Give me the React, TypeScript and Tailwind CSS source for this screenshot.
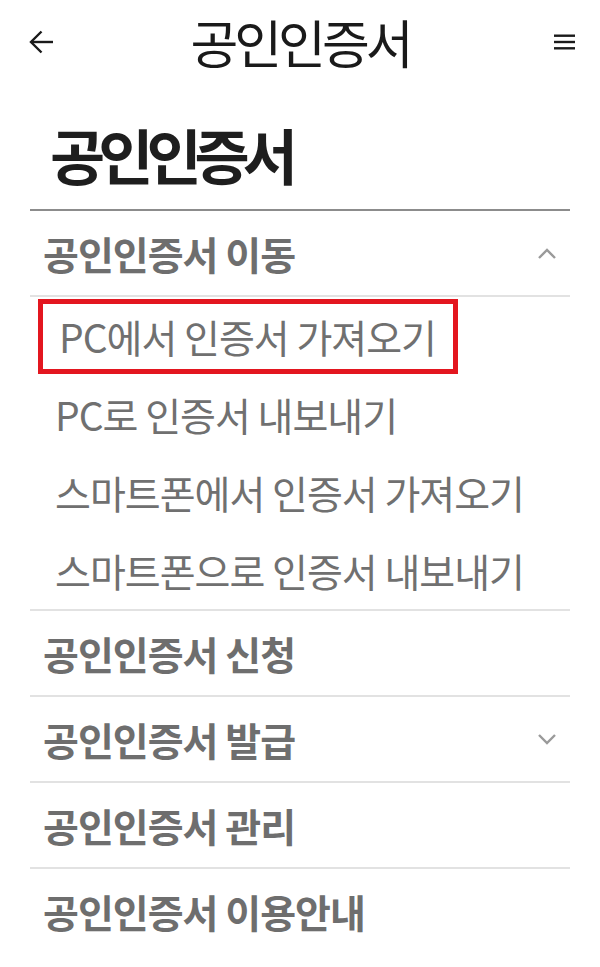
const font = { fontFamily: '"Noto Sans CJK KR", "Noto Sans", sans-serif' };

function BackArrow() {
  return (
    <svg width="26" height="24" viewBox="0 0 26 24" fill="none" stroke="#1a1a1a" strokeWidth="2.4">
      <path d="M25 12H3" />
      <path d="M13.5 1.5L3 12l10.5 10.5" />
    </svg>
  );
}

function MenuIcon() {
  return (
    <svg width="21" height="16" viewBox="0 0 21 16" fill="#1a1a1a">
      <rect x="0" y="0.5" width="21" height="2.4" />
      <rect x="0" y="6.8" width="21" height="2.4" />
      <rect x="0" y="13.1" width="21" height="2.4" />
    </svg>
  );
}

function Chevron({ up }: { up?: boolean }) {
  return (
    <svg width="18" height="11" viewBox="0 0 18 11" fill="none" stroke="#9a9a9a" strokeWidth="2.4">
      <path d={up ? "M1 10l8-8 8 8" : "M1 1l8 8 8-8"} />
    </svg>
  );
}

const subItems = ["PC로 인증서 내보내기", "스마트폰에서 인증서 가져오기", "스마트폰으로 인증서 내보내기"];

const sections = [
  { label: "공인인증서 신청" },
  { label: "공인인증서 발급", chevron: true },
  { label: "공인인증서 관리" },
  { label: "공인인증서 이용안내" },
];

export default function App() {
  return (
    <div className="w-[600px] h-[967px] bg-white overflow-hidden" style={font}>
      <header className="grid h-[84px] grid-cols-[1fr_auto_1fr] items-center">
        <div className="pl-[28px]">
          <BackArrow />
        </div>
        <h1 className="text-[52px] font-normal leading-none tracking-[-4px] text-[#1a1a1a]">공인인증서</h1>
        <div className="flex justify-end pr-[25px]">
          <MenuIcon />
        </div>
      </header>

      <div className="px-[30px]">
        <div className="h-[125px] pt-[40px] pl-[20px]">
          <h2 className="text-[60px] font-bold leading-none tracking-[-7px] text-[#1e1e1e]">공인인증서</h2>
        </div>

        <div className="flex h-[86px] items-center justify-between border-t-2 border-[#8c8c8c] pl-[13px] pr-[14px]">
          <span className="text-[39px] font-bold leading-none tracking-[-1px] text-[#6e6e6e]">공인인증서 이동</span>
          <Chevron up />
        </div>

        <div className="border-t-2 border-[#e2e2e2]">
          <div className="flex h-[78px] items-center">
            <div className="ml-[8px] flex h-[75px] w-[420px] items-center border-[5px] border-[#e3161f] pl-[16px]">
              <span className="text-[39px] leading-none tracking-[-1px] text-[#707070]">PC에서 인증서 가져오기</span>
            </div>
          </div>
          {subItems.map((item) => (
            <div key={item} className="flex h-[78px] items-center pl-[25px]">
              <span className="text-[39px] leading-none tracking-[-1px] text-[#707070]">{item}</span>
            </div>
          ))}
        </div>

        {sections.map((s) => (
          <div
            key={s.label}
            className="flex h-[86px] items-center justify-between border-t-2 border-[#e2e2e2] pl-[13px] pr-[14px]"
          >
            <span className="text-[39px] font-bold leading-none tracking-[-1px] text-[#6e6e6e]">{s.label}</span>
            {s.chevron && <Chevron />}
          </div>
        ))}
      </div>
    </div>
  );
}
